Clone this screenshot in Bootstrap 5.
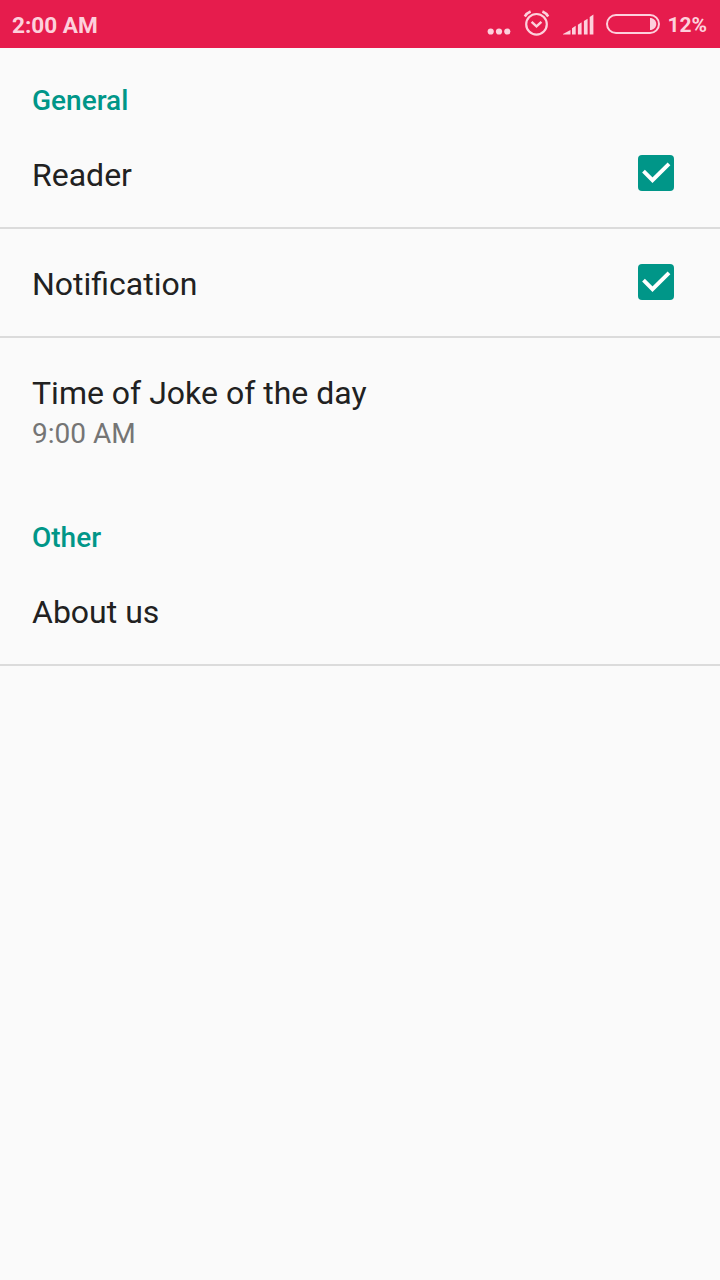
<!DOCTYPE html>
<html lang="en">
<head>
<meta charset="utf-8">
<meta name="viewport" content="width=device-width, initial-scale=1">
<title>Settings</title>
<link href="https://cdn.jsdelivr.net/npm/bootstrap@5.3.0/dist/css/bootstrap.min.css" rel="stylesheet">
<style>
  body { background: #fafafa; color: #212121; font-family: Roboto, "Liberation Sans", sans-serif; min-height: 1280px; }
  .status-bar { height: 48px; background: #e61c4d; color: #fdd0dc; padding: 1px 13px 0 12px; font-weight: 700; line-height: 48px; }
  .clock { font-size: 22.6px; padding-top: 1px; height: 47px; }
  .battery-text { font-size: 21px; margin-left: 5px; }
  .status-icons { margin-top: -1px; }
  .section-title { height: 72px; padding: 36px 32px 0; margin: 0; font-size: 28px; line-height: 33px; font-weight: 500; color: #009688; }
  .list-group-flush > .pref.list-group-item { height: 109px; padding: 36px 46px 0 32px; border: 0; border-bottom: 2px solid #dbdbdb; border-radius: 0; background: transparent; color: inherit; font-size: 32px; line-height: 38px; }
  .list-group-flush > .pref.pref-time.list-group-item { height: 147px; border-bottom: 0; }
  .pref-summary { margin-top: 5px; font-size: 28px; line-height: 33px; color: #757575; }
  .pref-check { margin-top: -1px; }
</style>
</head>
<body>
<header class="status-bar d-flex justify-content-between">
  <span class="clock">2:00 AM</span>
  <div class="d-flex">
    <svg class="status-icons" width="180" height="48" viewBox="482 0 180 48" fill="none" stroke="#fdd0dc" aria-hidden="true">
      <g fill="#fdd0dc" stroke="none">
        <circle cx="490.7" cy="31.500" r="3.100"/><circle cx="499" cy="31.500" r="3.100"/><circle cx="507.300" cy="31.500" r="3.100"/>
        <path d="M563 34.500V34l7.500-4v4.500zM572 28.200l3.700-2.400v8.700H572zM577.900 24.700l3.700-2.400v12.200h-3.700zM583.900 21l3.700-2.300v15.800h-3.700zM589.700 17l3.700-2.500v20h-3.700z"/>
        <path d="M650 18c3.500 0 6.300 2.600 6.300 6s-2.800 6-6.300 6z"/>
      </g>
      <circle cx="536.500" cy="24.300" r="10.300" stroke-width="2.200"/>
      <path d="M531.600 21.800l4.900 4.600 4.900-4.600" stroke-width="2.400"/>
      <path d="M524.800 16.500q2-3.400 5.800-5M548.200 16.500q-2-3.400-5.800-5" stroke-width="2.500"/>
      <rect x="607" y="15" width="52" height="18" rx="9" stroke-width="2"/>
    </svg>
    <span class="battery-text">12%</span>
  </div>
</header>
<main>
  <h2 class="section-title">General</h2>
  <div class="list-group list-group-flush">
    <div class="pref list-group-item d-flex justify-content-between">
      <span>Reader</span>
      <svg class="pref-check" width="36" height="36" viewBox="0 0 36 36" role="img" aria-label="Checked"><rect width="36" height="36" rx="4" fill="#009688"/><path d="M5.500 16.200l9 9L31 8.800" fill="none" stroke="#fff" stroke-width="3.900"/></svg>
    </div>
    <div class="pref list-group-item d-flex justify-content-between">
      <span>Notification</span>
      <svg class="pref-check" width="36" height="36" viewBox="0 0 36 36" role="img" aria-label="Checked"><rect width="36" height="36" rx="4" fill="#009688"/><path d="M5.500 16.200l9 9L31 8.800" fill="none" stroke="#fff" stroke-width="3.900"/></svg>
    </div>
    <div class="pref pref-time list-group-item">
      <div>Time of Joke of the day</div>
      <div class="pref-summary">9:00 AM</div>
    </div>
  </div>
  <h2 class="section-title">Other</h2>
  <div class="list-group list-group-flush">
    <div class="pref list-group-item">About us</div>
  </div>
</main>
<script src="https://cdn.jsdelivr.net/npm/bootstrap@5.3.0/dist/js/bootstrap.bundle.min.js"></script>
</body>
</html>
